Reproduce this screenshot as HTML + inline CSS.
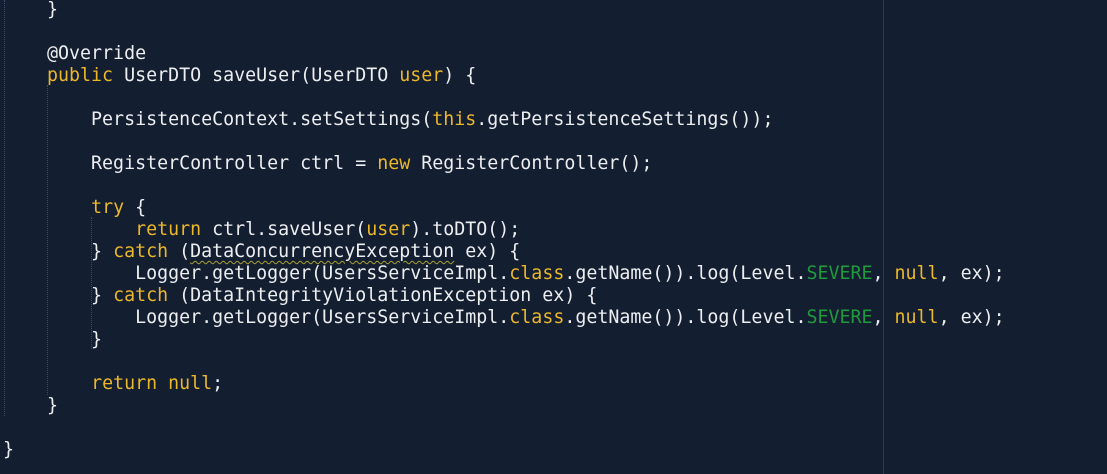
<!DOCTYPE html>
<html><head><style>
html,body{margin:0;padding:0;background:#141e31;width:1107px;height:474px;overflow:hidden}
pre{position:absolute;left:3px;top:-1px;margin:0;font-family:"DejaVu Sans Mono","Liberation Mono",monospace;font-size:18.3px;line-height:22px;color:#eceef0}
.k{color:#ebb82a}.g{color:#1f9a3c}
.u{text-decoration:underline wavy #a8a030;text-decoration-thickness:1px;text-underline-offset:3px}
.v{position:absolute;width:0;border-left:1px dotted #3a4a6a}
</style></head><body>
<div class="v" style="left:4px;top:0;height:416px"></div>
<div class="v" style="left:47px;top:85px;height:310px"></div>
<div class="v" style="left:91px;top:217px;height:132px"></div>
<div style="position:absolute;left:883px;top:0;width:1px;height:474px;background:#2a3a58"></div>
<pre>    }

    @Override
    <span class="k">public</span> UserDTO saveUser(UserDTO <span class="k">user</span>) {

        PersistenceContext.setSettings(<span class="k">this</span>.getPersistenceSettings());

        RegisterController ctrl = <span class="k">new</span> RegisterController();

        <span class="k">try</span> {
            <span class="k">return</span> ctrl.saveUser(<span class="k">user</span>).toDTO();
        } <span class="k">catch</span> (<span class="u">DataConcurrencyException</span> ex) {
            Logger.getLogger(UsersServiceImpl.<span class="k">class</span>.getName()).log(Level.<span class="g">SEVERE</span>, <span class="k">null</span>, ex);
        } <span class="k">catch</span> (DataIntegrityViolationException ex) {
            Logger.getLogger(UsersServiceImpl.<span class="k">class</span>.getName()).log(Level.<span class="g">SEVERE</span>, <span class="k">null</span>, ex);
        }

        <span class="k">return</span> <span class="k">null</span>;
    }

}</pre>
</body></html>
